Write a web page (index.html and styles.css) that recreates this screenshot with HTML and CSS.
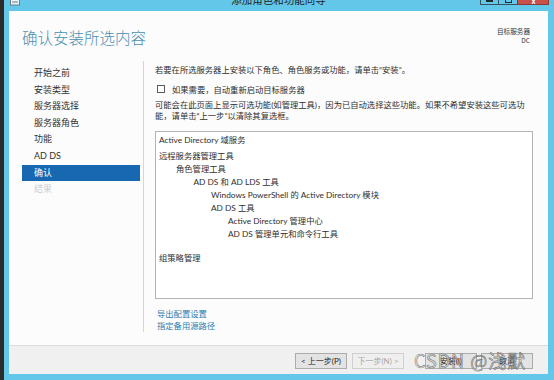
FILE: index.html
```html
<!DOCTYPE html>
<html lang="zh-CN">
<head>
<meta charset="utf-8">
<title>添加角色和功能向导</title>
<link rel="stylesheet" href="styles.css">
</head>
<body>
<div class="screen">
  <div class="desk"></div>
  <div class="window">
    <div class="titlebar">
      <div class="tb-left">
        <svg class="win-icon" width="10" height="6" viewBox="0 0 10 6"><rect x="0.5" y="-3" width="9" height="8" fill="#e8f4f8" stroke="#6a7f88"/><line x1="2" y1="2" x2="8" y2="2" stroke="#6a7f88"/></svg>
      </div>
      <div class="title">添加角色和功能向导</div>
      <div class="controls">
        <span class="ctl ctl-min"><span class="glyph-min"></span></span>
        <span class="ctl ctl-max"><span class="glyph-max"></span></span>
        <span class="ctl ctl-close"><svg width="31" height="5" viewBox="0 0 31 5"><path d="M13.5 -2 L16 1.5 L18.5 -2 M14.5 4 L16 1.5 L17.5 4" stroke="#fff" stroke-width="1.1" fill="none"/></svg></span>
      </div>
    </div>
    <div class="client">
      <div class="header">
        <h1 class="heading">确认安装所选内容</h1>
        <div class="target">
          <div>目标服务器</div>
          <div>DC</div>
        </div>
      </div>
      <div class="body">
        <ul class="nav">
          <li>开始之前</li>
          <li>安装类型</li>
          <li>服务器选择</li>
          <li>服务器角色</li>
          <li>功能</li>
          <li>AD DS</li>
          <li class="active">确认</li>
          <li class="disabled">结果</li>
        </ul>
        <div class="main">
          <p class="intro">若要在所选服务器上安装以下角色、角色服务或功能，请单击“安装”。</p>
          <label class="check-row"><span class="checkbox"></span><span>如果需要，自动重新启动目标服务器</span></label>
          <p class="note">可能会在此页面上显示可选功能(如管理工具)，因为已自动选择这些功能。如果不希望安装这些可选功能，请单击“上一步”以清除其复选框。</p>
          <div class="list">
            <div class="item l0 group-head">Active Directory 域服务</div>
            <div class="item l0">远程服务器管理工具</div>
            <div class="item l1">角色管理工具</div>
            <div class="item l2">AD DS 和 AD LDS 工具</div>
            <div class="item l3">Windows PowerShell 的 Active Directory 模块</div>
            <div class="item l3">AD DS 工具</div>
            <div class="item l4">Active Directory 管理中心</div>
            <div class="item l4">AD DS 管理单元和命令行工具</div>
            <div class="item l0 group-gap">组策略管理</div>
          </div>
          <div class="links">
            <a class="link">导出配置设置</a>
            <a class="link">指定备用源路径</a>
          </div>
        </div>
      </div>
      <div class="footer">
        <button class="btn">&lt; 上一步(P)</button>
        <button class="btn btn-disabled">下一步(N) &gt;</button>
        <button class="btn btn-install">安装(I)</button>
        <button class="btn btn-cancel">取消</button>
        <div class="watermark">CSDN @浅默</div>
      </div>
    </div>
  </div>
</div>
</body>
</html>
```
FILE: styles.css
```css
* { box-sizing: border-box; margin: 0; padding: 0; }
html, body { width: 554px; height: 380px; overflow: hidden; }
body {
  background: #2a2a2a;
  font-family: Lato, "Noto Sans CJK SC", sans-serif;
  color: #2e2e2e;
}
.screen { display: flex; height: 380px; }
.desk { width: 4px; background: #2b2b2b; }
.window {
  flex: 1;
  background: #63c7e9;
  display: flex;
  flex-direction: column;
  padding: 0 6px 6px 5px;
}
.titlebar {
  height: 12px;
  display: grid;
  grid-template-columns: 1fr auto 1fr;
  align-items: start;
}
.tb-left { display: flex; }
.win-icon { display: block; margin-left: 1px; }
.title {
  font-family: "Noto Sans CJK SC", sans-serif;
  font-size: 10.5px;
  line-height: 12px;
  margin-top: -6.5px;
  color: #1e1e1e;
}
.controls { justify-self: end; display: flex; margin-right: -1px; }
.ctl {
  display: flex;
  justify-content: center;
  height: 5px;
  border: 1px solid #35525d;
  border-top: none;
}
.ctl-min { width: 19px; background: #63c7e9; }
.ctl-max { width: 19px; background: #63c7e9; border-left: none; }
.ctl-close { width: 31px; background: #c9514a; border-left: none; border-color: #8a3a36; }
.glyph-min { width: 7px; height: 2px; background: #1d2b30; }
.glyph-max { width: 7px; height: 3px; border: 1px solid #1d2b30; border-top: none; }

.client {
  flex: 1;
  background: #fcfcfc;
  display: flex;
  flex-direction: column;
}
.header {
  height: 50px;
  display: flex;
  justify-content: space-between;
  padding: 15.5px 18px 0 13px;
}
.heading {
  font-family: "Noto Sans CJK SC", sans-serif;
  font-weight: 300;
  font-size: 15.5px;
  line-height: 20px;
  color: #4a8fb1;
}
.target {
  text-align: right;
  font-family: "Noto Sans CJK SC", sans-serif;
  font-size: 6.6px;
  line-height: 8.5px;
  padding-top: 0.5px;
  color: #333;
}
.body {
  flex: 1;
  display: flex;
  padding-bottom: 13px;
}
.nav {
  list-style: none;
  width: 134px;
  padding: 4px 3px 0 13px;
  font-size: 9px;
}
.nav li {
  height: 16.6px;
  line-height: 16.6px;
  padding-left: 12px;
  color: #333;
}
.nav li.active { background: #1767b1; color: #fff; }
.nav li.disabled { color: #cfcfcf; }
.main {
  flex: 1;
  border-left: 1px solid #d6d6d6;
  padding: 3.5px 15px 0 11px;
  font-size: 8.3px;
  display: flex;
  flex-direction: column;
}
.intro { line-height: 11px; }
.check-row {
  display: flex;
  align-items: center;
  gap: 7px;
  height: 11px;
  margin-top: 8px;
  padding-left: 2px;
}
.checkbox {
  width: 8px;
  height: 8px;
  border: 1px solid #5a5a5a;
  background: #fff;
}
.note { line-height: 10.5px; margin-top: 5.75px; padding-right: 6px; }
.list {
  margin-top: 9.75px;
  height: 168px;
  border: 1px solid #b4b4b4;
  background: #fff;
  padding: 1.5px 4px 0 3px;
}
.item { line-height: 13px; height: 13px; white-space: nowrap; }
.group-head { margin-bottom: 3px; }
.group-gap { margin-top: 11px; }
.l1 { padding-left: 17px; }
.l2 { padding-left: 34.5px; }
.l3 { padding-left: 52px; }
.l4 { padding-left: 69px; }
.links {
  margin-top: 9px;
  padding-left: 2px;
  display: flex;
  flex-direction: column;
}
.link { color: #2d7eb1; line-height: 12px; }

.footer {
  position: relative;
  height: 29px;
  border-top: 1px solid #dcdcdc;
  background: #f0f0f0;
  display: flex;
  justify-content: flex-end;
  align-items: flex-start;
  padding: 7px 15px 0 0;
}
.btn {
  font-family: Lato, "Noto Sans CJK SC", sans-serif;
  font-size: 8px;
  width: 52px;
  height: 16px;
  line-height: 14px;
  border: 1px solid #acacac;
  background: #e3e3e3;
  color: #222;
}
.btn + .btn { margin-left: 5px; }
.btn-disabled { color: #a6a6a6; border-color: #d0d0d0; background: #efefef; }
.btn.btn-install { margin-left: 21px; }
.btn.btn-cancel { margin-left: 4px; }
.watermark {
  position: absolute;
  left: 405px;
  top: 4px;
  font-family: "Noto Sans CJK SC", sans-serif;
  font-size: 18px;
  line-height: 21px;
  letter-spacing: 1px;
  white-space: nowrap;
  color: rgba(215, 215, 215, 0.5);
  -webkit-text-stroke: 0.6px rgba(95, 95, 95, 0.85);
}
```
